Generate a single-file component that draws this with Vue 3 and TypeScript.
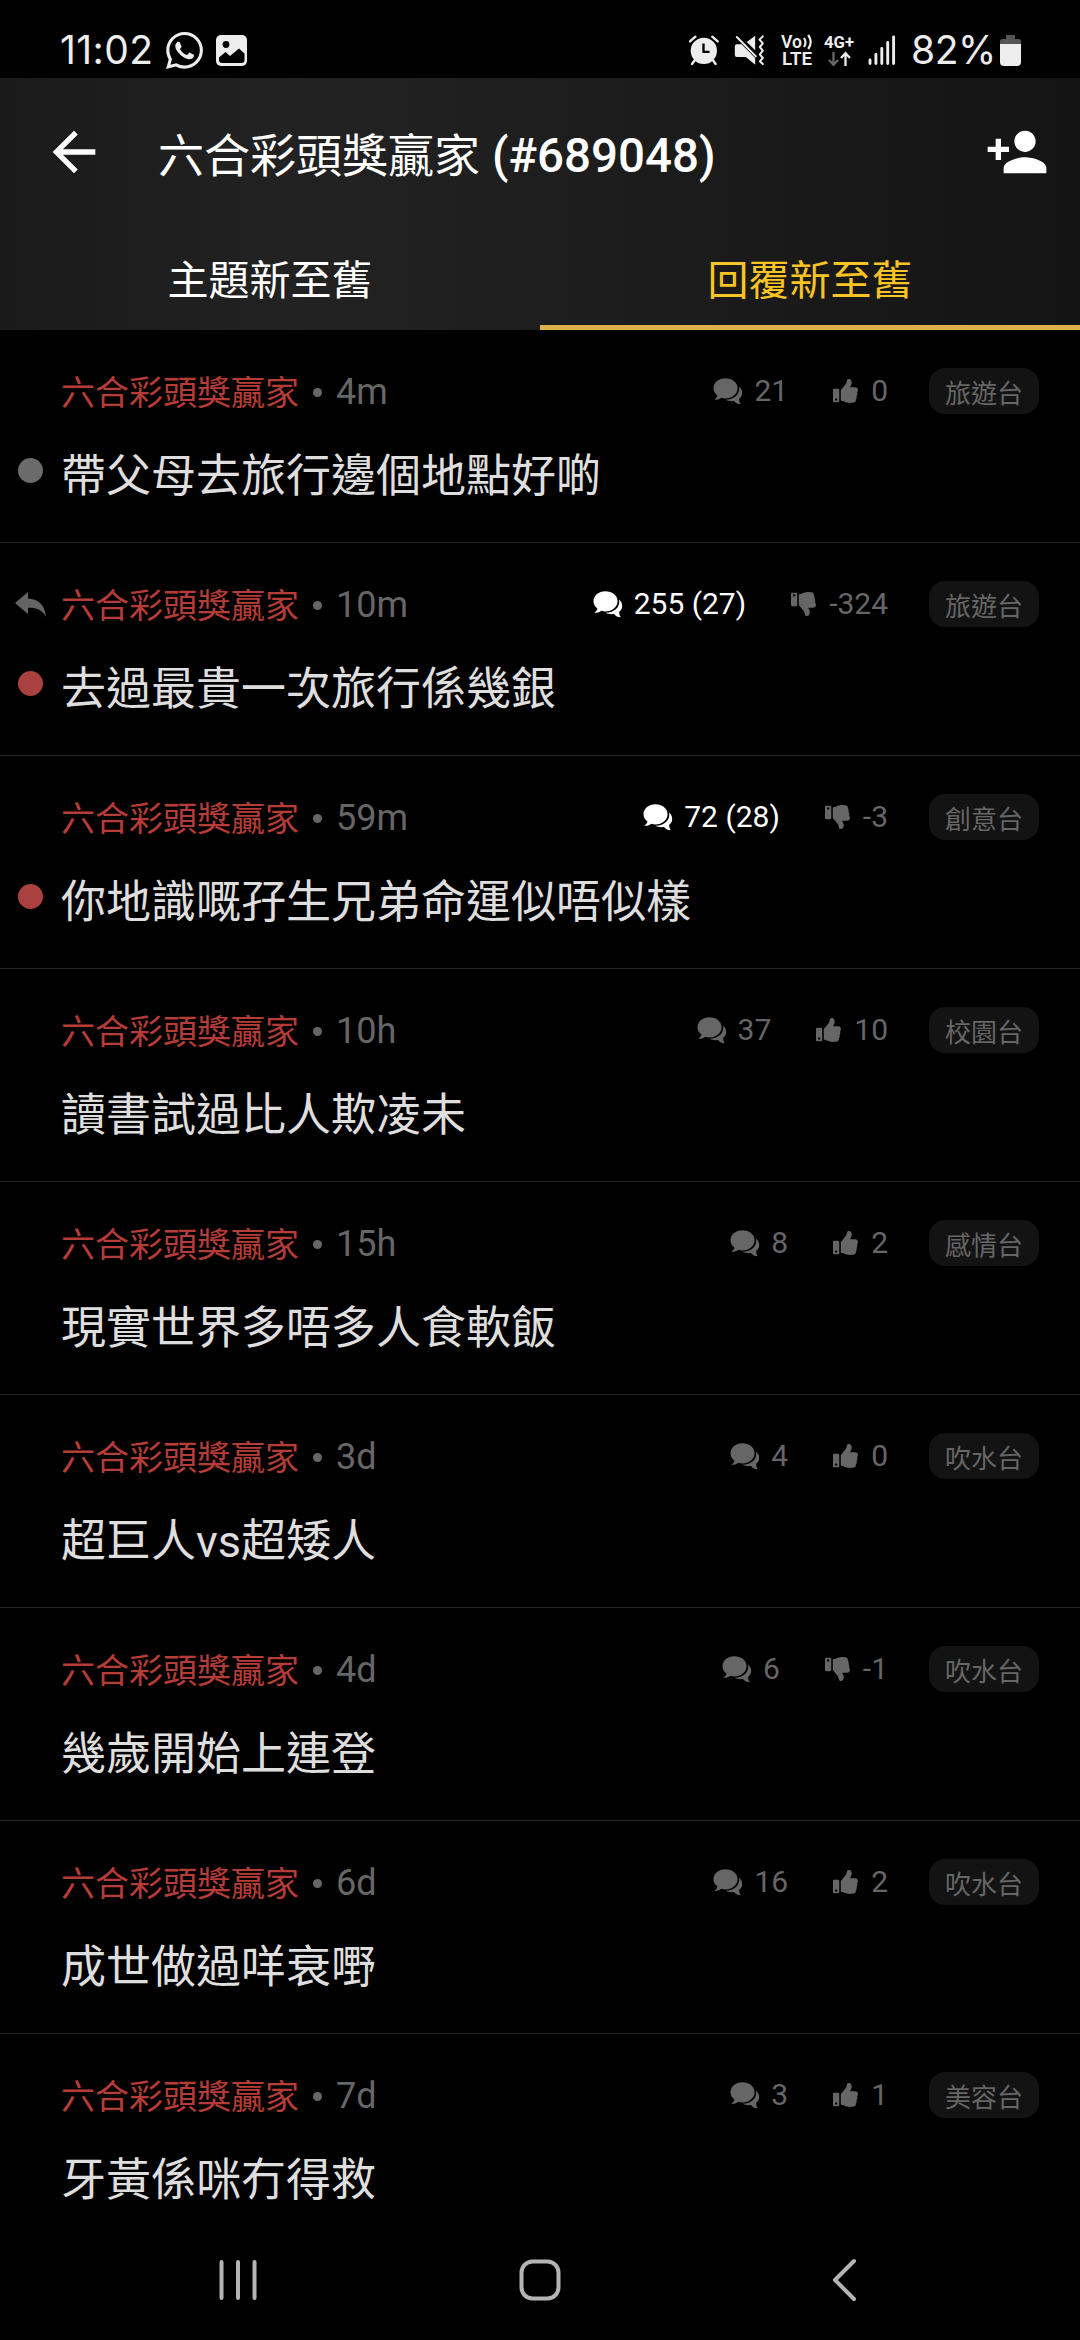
<script setup lang="ts">
interface Thread {
  time: string
  replies: string
  hot?: boolean
  score: number
  board: string
  title: string
  dot?: 'grey' | 'red'
  replied?: boolean
}

const author = '六合彩頭獎贏家'
const userId = '689048'

const threads: Thread[] = [
  { time: '4m', replies: '21', score: 0, board: '旅遊台', title: '帶父母去旅行邊個地點好啲', dot: 'grey' },
  { time: '10m', replies: '255 (27)', hot: true, score: -324, board: '旅遊台', title: '去過最貴一次旅行係幾銀', dot: 'red', replied: true },
  { time: '59m', replies: '72 (28)', hot: true, score: -3, board: '創意台', title: '你地識嘅孖生兄弟命運似唔似樣', dot: 'red' },
  { time: '10h', replies: '37', score: 10, board: '校園台', title: '讀書試過比人欺凌未' },
  { time: '15h', replies: '8', score: 2, board: '感情台', title: '現實世界多唔多人食軟飯' },
  { time: '3d', replies: '4', score: 0, board: '吹水台', title: '超巨人vs超矮人' },
  { time: '4d', replies: '6', score: -1, board: '吹水台', title: '幾歲開始上連登' },
  { time: '6d', replies: '16', score: 2, board: '吹水台', title: '成世做過咩衰嘢' },
  { time: '7d', replies: '3', score: 1, board: '美容台', title: '牙黃係咪冇得救' },
]
</script>

<template>
  <div class="screen">
    <div class="status">
      <span class="clock">11:02</span>
      <svg class="whatsapp" viewBox="0 0 24 24" fill="#ededed">
        <path d="M17.472 14.382c-.297-.149-1.758-.867-2.03-.967-.273-.099-.471-.148-.67.15-.197.297-.767.966-.94 1.164-.173.199-.347.223-.644.075-.297-.15-1.255-.463-2.39-1.475-.883-.788-1.48-1.761-1.653-2.059-.173-.297-.018-.458.13-.606.134-.133.298-.347.446-.52.149-.174.198-.298.298-.497.099-.198.05-.371-.025-.52-.075-.149-.669-1.612-.916-2.207-.242-.579-.487-.5-.669-.51-.173-.008-.371-.01-.57-.01-.198 0-.52.074-.792.372-.272.297-1.04 1.016-1.04 2.479 0 1.462 1.065 2.875 1.213 3.074.149.198 2.096 3.2 5.077 4.487.709.306 1.262.489 1.694.625.712.227 1.36.195 1.871.118.571-.085 1.758-.719 2.006-1.413.248-.694.248-1.289.173-1.413-.074-.124-.272-.198-.57-.347m-5.421 7.403h-.004a9.87 9.87 0 01-5.031-1.378l-.361-.214-3.741.982.998-3.648-.235-.374a9.86 9.86 0 01-1.51-5.26c.001-5.45 4.436-9.884 9.888-9.884 2.64 0 5.122 1.03 6.988 2.898a9.825 9.825 0 012.893 6.994c-.003 5.45-4.437 9.884-9.885 9.884m8.413-18.297A11.815 11.815 0 0012.05 0C5.495 0 .16 5.335.157 11.892c0 2.096.547 4.142 1.588 5.945L.057 24l6.305-1.654a11.882 11.882 0 005.683 1.448h.005c6.554 0 11.89-5.335 11.893-11.893a11.821 11.821 0 00-3.48-8.413z" />
      </svg>
      <svg class="gallery" viewBox="0 0 31 31">
        <rect width="31" height="31" rx="5" fill="#ededed" />
        <circle cx="10" cy="9.5" r="3.4" fill="#000" />
        <path d="M3 22.500 9.500 17l4.500 4 9-7.500 5.500 5v6.500q0 3-3 3H6q-3 0-3-3z" fill="#000" />
      </svg>
      <div class="status-right">
        <svg width="30" height="30" viewBox="57 43 89 89">
          <circle cx="101" cy="90" r="39" fill="#ededed" />
          <path d="M60 62l16-14M142 62l-16-14M74 118l-8 11M128 118l8 11" stroke="#ededed" stroke-width="7" stroke-linecap="round" />
          <path d="M100 68v25h18" fill="none" stroke="#000" stroke-width="7" />
        </svg>
        <svg class="mute" width="31" height="30" viewBox="190 43 92 90" fill="#ededed">
          <path d="M192 77q0-6 6-6h14l41 41v20l-28-23h-27q-6 0-6-6zM253 45v44l-25-25z" />
          <path d="M198 49l57 58M276 47l-10 10 10 11-9 11 9 11-9 11 9 11-9 10 9 8" fill="none" stroke="#ededed" stroke-width="6" stroke-linejoin="round" stroke-linecap="round" />
        </svg>
        <svg class="volte" width="32" height="50" viewBox="0 -8 32 50" fill="#ededed">
          <text x="0" y="15" font-size="18" font-weight="600" textLength="21" lengthAdjust="spacingAndGlyphs">Vo</text>
          <path d="M23 5q3 4.500 0 9M27.200 2q5 7 0 14" fill="none" stroke="#ededed" stroke-width="2.200" />
          <text x="1" y="32" font-size="18" font-weight="600" textLength="30" lengthAdjust="spacingAndGlyphs">LTE</text>
        </svg>
        <svg class="net" width="31" height="50" viewBox="0 -8 31 50" fill="#ededed">
          <text x="0" y="15" font-size="16" font-weight="700" textLength="30" lengthAdjust="spacingAndGlyphs">4G+</text>
          <path d="M9.500 19v12.500M5 27l4.500 4.800L14 27" fill="none" stroke="#666" stroke-width="2.300" />
          <path d="M21.500 33V20.500M17 25l4.500-4.800L26 25" fill="none" stroke="#ededed" stroke-width="2.300" />
        </svg>
        <svg class="signal" width="28" height="30" viewBox="0 0 28 30">
          <path d="M2 25v3.500M7.900 19.500v9M13.800 13.500v15M19.700 7.500v21M25.600 2v26.500" stroke="#ededed" stroke-width="2.900" stroke-linecap="round" />
        </svg>
        <span class="percent">82%</span>
        <svg class="battery" width="21" height="31" viewBox="0 0 21 31">
          <path d="M6 0h9v4h4q2 0 2 2v3H0V6q0-2 2-2h4z" fill="#555" />
          <path d="M0 9h21v18q0 4-4 4H4q-4 0-4-4z" fill="#ededed" />
        </svg>
      </div>
    </div>

    <header class="header">
      <div class="toolbar">
        <svg class="back" viewBox="0 0 24 24" fill="#fff">
          <path d="M20 11H7.830l5.590-5.590L12 4l-8 8 8 8 1.410-1.410L7.830 13H20v-2z" />
        </svg>
        <h1 class="heading"><span class="heading-name">{{ author }}</span><span class="heading-id">(#{{ userId }})</span></h1>
        <svg class="follow" viewBox="0 0 24 24" fill="#fff">
          <path d="M15 12c2.210 0 4-1.790 4-4s-1.790-4-4-4-4 1.790-4 4 1.790 4 4 4zm-9-2V7H4v3H1v2h3v3h2v-3h3v-2H6zm9 4c-2.670 0-8 1.340-8 4v2h16v-2c0-2.660-5.330-4-8-4z" />
        </svg>
      </div>
      <nav class="tabs">
        <div class="tab">主題新至舊</div>
        <div class="tab active">回覆新至舊</div>
      </nav>
    </header>

    <main class="list">
      <article v-for="t in threads" :key="t.title" class="thread">
        <div class="meta">
          <div class="gutter">
            <svg v-if="t.replied" class="reply" viewBox="0 0 31 25" preserveAspectRatio="none">
              <path d="M13 0v6.500C23 7 30 12.500 31 25C27 17.500 21 15.500 13 15.700V22L0 11z" fill="#646464" />
            </svg>
          </div>
          <span class="author">{{ author }}</span>
          <i class="sep"></i>
          <span class="time">{{ t.time }}</span>
          <span class="stat comments" :class="{ hot: t.hot }">
            <svg width="30" height="27" viewBox="0 0 90 82" fill="currentColor">
              <path d="M37 1C17 1 1 14 1 31c0 9 4 17 12 22-1 5-4 9-10 13 9 1 17-2 22-6 4 1 8 2 12 2C57 62 74 49 74 31S57 1 37 1z" />
              <path d="M79 26C85 32 88 38 88 46c0 8-4 13-9 17 0 6 1 12 5 17-9 0-16-4-21-10-9 1-18 0-25-4C64 66 82 50 79 26z" />
            </svg>
            <span>{{ t.replies }}</span>
          </span>
          <span class="stat">
            <svg class="thumb" :class="{ down: t.score < 0 }" width="25" height="24" viewBox="0 0 512 512" preserveAspectRatio="none" fill="currentColor">
              <path d="M104 210H24c-13.255 0-24 10.745-24 24v238c0 13.255 10.745 24 24 24h80c13.255 0 24-10.745 24-24V234c0-13.255-10.745-24-24-24zM64 462c-13.255 0-24-10.745-24-24s10.745-24 24-24 24 10.745 24 24-10.745 24-24 24zM384 81.452c0 42.416-25.970 66.208-33.277 94.548h101.723c33.397 0 59.397 27.746 59.553 58.098.084 17.938-7.546 37.249-19.439 49.197l-.11.11c9.836 23.337 8.237 56.037-9.308 79.469 8.681 25.895-.069 57.704-16.382 74.757 4.298 17.598 2.244 32.575-6.148 44.632C440.202 511.587 389.616 512 346.839 512l-2.845-.001c-48.287-.017-87.806-17.598-119.560-31.725-15.957-7.099-36.821-15.887-52.651-16.178-6.540-.12-11.783-5.457-11.783-11.998v-213.770c0-3.200 1.282-6.271 3.558-8.521 39.614-39.144 56.648-80.587 89.117-113.111 14.804-14.832 20.188-37.236 25.393-58.902C282.515 39.293 291.817 0 312 0c24 0 72 8 72 81.452z" />
            </svg>
            <span>{{ t.score }}</span>
          </span>
          <span class="board">{{ t.board }}</span>
        </div>
        <div class="subject">
          <div class="gutter"><i v-if="t.dot" class="dot" :class="t.dot"></i></div>
          <h2 class="title">{{ t.title }}</h2>
        </div>
      </article>
    </main>

    <footer class="navbar">
      <svg width="42" height="44" viewBox="0 0 42 44">
        <path d="M4.500 4v36M21 4v36M37.500 4v36" stroke="#b4b4b4" stroke-width="4" stroke-linecap="round" />
      </svg>
      <svg class="home" width="44" height="44" viewBox="0 0 44 44">
        <rect x="3.500" y="3.500" width="37" height="37" rx="11" fill="none" stroke="#b4b4b4" stroke-width="4" />
      </svg>
      <svg width="28" height="44" viewBox="0 0 28 44">
        <path d="M24 3 5 22l19 19" fill="none" stroke="#b4b4b4" stroke-width="4" stroke-linecap="round" stroke-linejoin="round" />
      </svg>
    </footer>
  </div>
</template>

<style>
body {
  background: #000;
}
</style>

<style scoped>
.screen {
  width: 1080px;
  height: 2340px;
  display: flex;
  flex-direction: column;
  overflow: hidden;
  background: #000;
  font-family: Roboto, "Noto Sans CJK TC", sans-serif;
}

svg {
  display: block;
  flex: none;
}

.status {
  height: 78px;
  flex: none;
  display: flex;
  align-items: center;
  box-sizing: border-box;
  padding: 22px 59px 0 60px;
  color: #ededed;
}

.clock,
.percent {
  font-family: Inter, sans-serif;
  font-size: 39px;
  line-height: 56px;
}

.clock {
  width: 106px;
  letter-spacing: 0.4px;
}

.whatsapp {
  width: 37px;
  height: 37px;
}

.gallery {
  width: 31px;
  height: 31px;
  margin-left: 13px;
}

.status-right {
  margin-left: auto;
  display: flex;
  align-items: center;
}

.mute { margin-left: 15px; }
.volte { margin-left: 16px; }
.net { margin-left: 11px; }
.signal { margin-left: 13px; }

.percent {
  width: 87px;
  margin-left: 15px;
  letter-spacing: -0.5px;
  white-space: nowrap;
}

.battery { margin-left: 2px; }

.header {
  flex: none;
  background: linear-gradient(90deg, #1a1a1a 0%, #222 27%, #212121 35%, #141414 100%);
}

.toolbar {
  height: 147px;
  display: flex;
  align-items: center;
  padding: 0 31px 0 42px;
}

.back {
  width: 64px;
  height: 64px;
}

.heading {
  flex: 1;
  margin: 0 0 0 52px;
  display: flex;
  align-items: center;
  color: #fff;
  font-weight: 500;
  line-height: 60px;
  white-space: nowrap;
}

.heading-name {
  font-family: "Noto Sans CJK TC", sans-serif;
  font-size: 46px;
  font-weight: 400;
}

.heading-id {
  margin: 8px 0 0 12px;
  font-size: 47.500px;
}

.follow {
  width: 64px;
  height: 64px;
}

.tabs {
  height: 105px;
  display: flex;
}

.tab {
  flex: 1;
  box-sizing: border-box;
  padding-top: 3px;
  border-bottom: 5px solid transparent;
  color: #fff;
  font-family: "Noto Sans CJK TC", sans-serif;
  font-size: 41px;
  line-height: 99px;
  text-align: center;
}

.tab.active {
  border-bottom-color: #deb04a;
  color: #f9c424;
}

.list {
  flex: 1;
  min-height: 0;
  overflow: hidden;
}

.thread {
  height: 213px;
  box-sizing: border-box;
  padding: 38px 42px 0 0;
  border-bottom: 1px solid #262626;
}

.meta {
  height: 46px;
  display: flex;
  align-items: center;
  color: #666;
}

.gutter {
  width: 61px;
  flex: none;
  display: flex;
  align-items: center;
  justify-content: center;
}

.reply {
  width: 31px;
  height: 25px;
}

.author {
  color: #b63c37;
  font-family: "Noto Sans CJK TC", sans-serif;
  font-size: 34px;
  line-height: 48px;
}

.sep {
  width: 9px;
  height: 9px;
  margin: 2px 14px 0;
  border-radius: 50%;
  background: #666;
}

.time {
  margin-top: 2px;
  font-size: 36px;
  line-height: 46px;
}

.stat {
  display: flex;
  align-items: center;
  gap: 13px;
  font-size: 30px;
  line-height: 46px;
  white-space: nowrap;
}

.comments {
  margin-left: auto;
  margin-right: 45px;
  gap: 11px;
}

.hot {
  color: #fff;
}

.thumb.down {
  transform: scaleY(-1);
}

.board {
  width: 110px;
  height: 46px;
  margin-left: 41px;
  margin-right: -1px;
  flex: none;
  border-radius: 16px;
  background: #131313;
  font-family: "Noto Sans CJK TC", sans-serif;
  font-size: 26px;
  line-height: 48px;
  text-align: center;
}

.subject {
  height: 60px;
  margin-top: 33px;
  display: flex;
  align-items: center;
}

.title {
  margin: 0;
  color: #dedede;
  font-size: 45px;
  font-weight: 400;
  line-height: 60px;
  white-space: nowrap;
}

.dot {
  width: 25px;
  height: 25px;
  margin-bottom: 14px;
  border-radius: 50%;
}

.dot.grey { background: #6b6b6b; }
.dot.red { background: #ab4040; }

.navbar {
  height: 120px;
  flex: none;
  display: flex;
  align-items: center;
  justify-content: space-between;
  padding: 0 222px 0 217px;
}

.home {
  margin-right: 9px;
}
</style>
